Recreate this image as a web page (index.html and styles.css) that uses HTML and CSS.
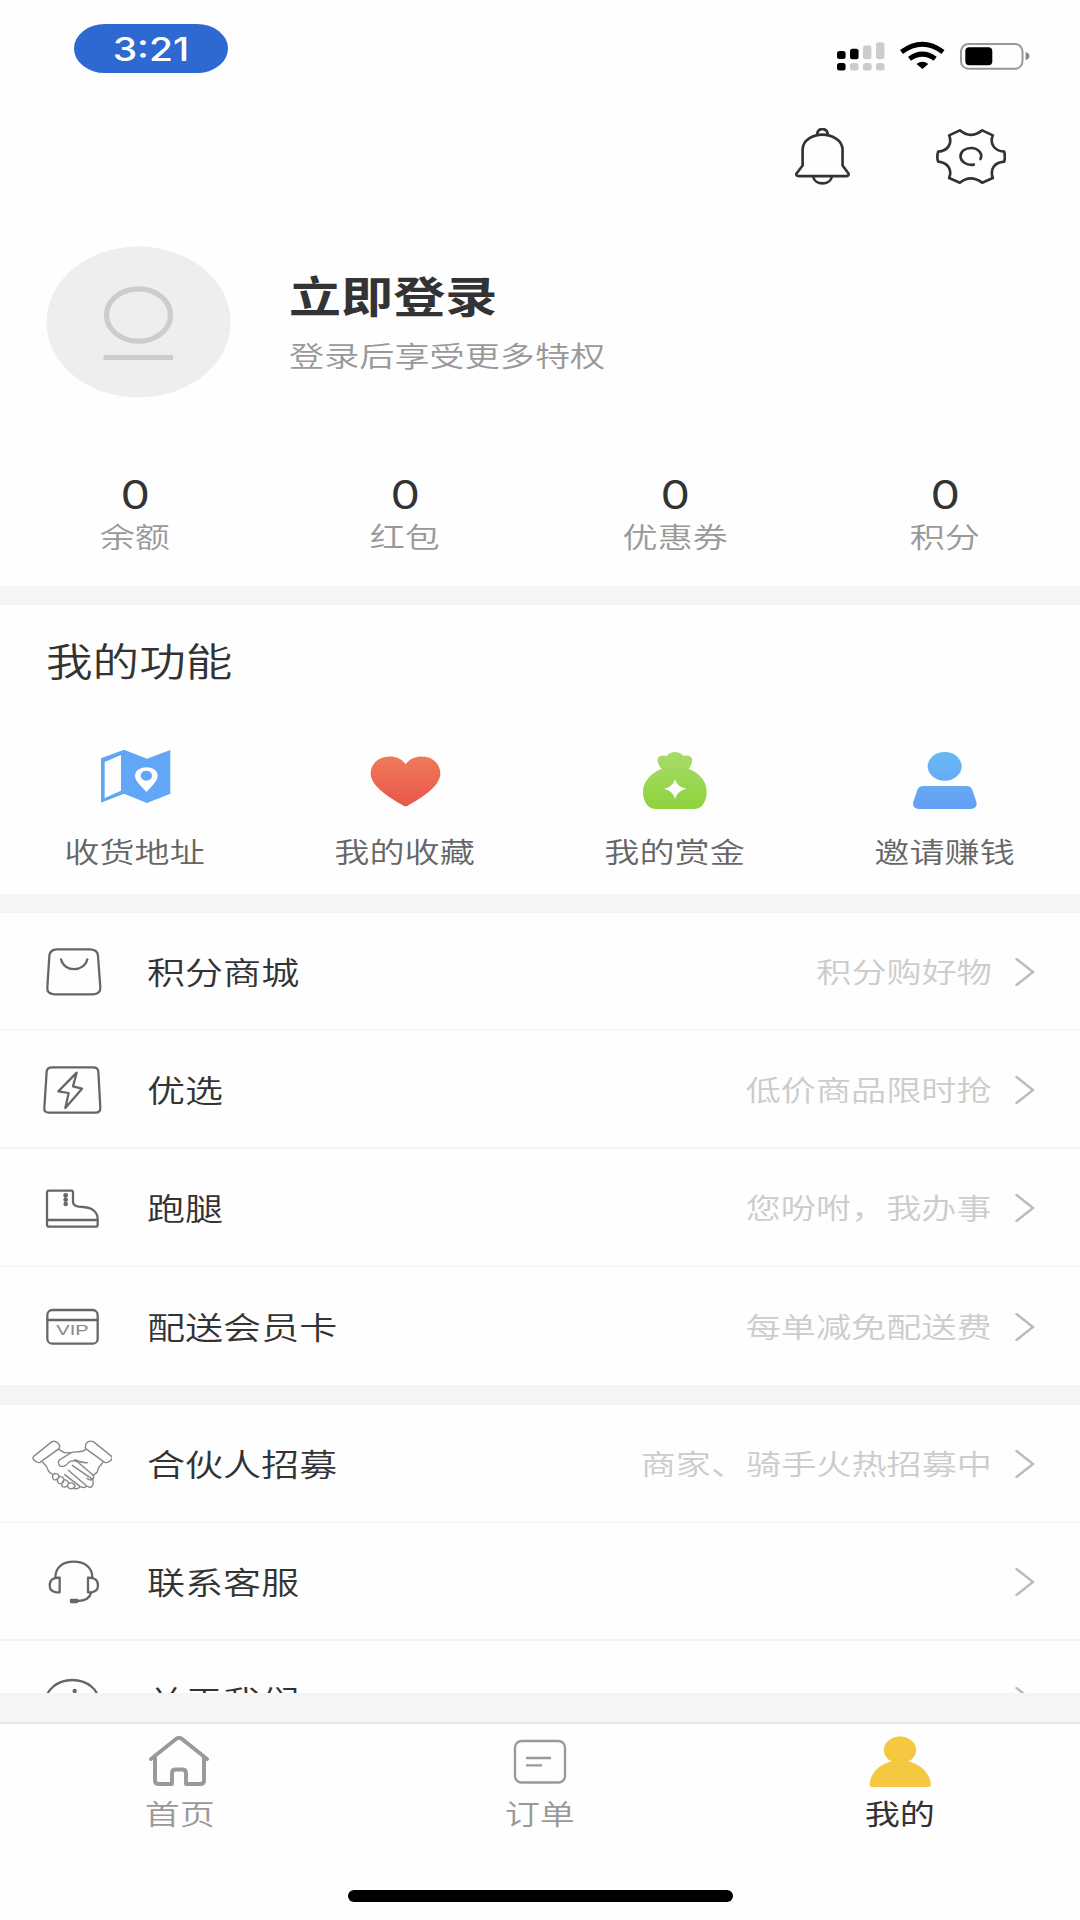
FILE: index.html
```html
<!DOCTYPE html>
<html lang="zh-CN">
<head>
<meta charset="utf-8">
<title>我的</title>
<link rel="stylesheet" href="styles.css">
</head>
<body>
<div class="page">
  <header class="status">
    <div class="time"><span>3:21</span></div>
    <svg class="indicators" viewBox="836 40 194 32" width="194" height="32">
      <g fill="#000"><rect x="837" y="51" width="8.6" height="8" rx="2.5"/><rect x="850" y="48.7" width="8.6" height="10.5" rx="2.5"/><rect x="837" y="63" width="8.6" height="7.5" rx="2.5"/></g>
      <g fill="#ccc"><rect x="863" y="45.5" width="8.4" height="13.7" rx="2.5"/><rect x="876" y="42.3" width="8.4" height="17" rx="2.5"/><rect x="850" y="63" width="8.6" height="7.5" rx="2.5"/><rect x="863" y="63" width="8.6" height="7.5" rx="2.5"/><rect x="876" y="63" width="8.6" height="7.5" rx="2.5"/></g>
      <g fill="none" stroke="#000" stroke-width="5"><path d="M901.5 52Q922.5 36.500 943 52"/><path d="M909.500 58.800Q922.500 49.500 935.200 58.800"/></g>
      <path d="M916.500 64Q922.500 59.500 928.300 64L922.400 69z"/>
      <rect x="961" y="44" width="61.500" height="24.800" rx="7.500" fill="none" stroke="#999" stroke-width="2"/>
      <rect x="965.300" y="47.200" width="27" height="18" rx="4"/>
      <path d="M1025.600 52Q1029.500 53 1029.500 56T1025.600 60z" fill="#888"/>
    </svg>
  </header>

  <div class="tools">
    <svg viewBox="105 322 164 172" width="55" height="57" class="line dark">
      <path d="M171 342q0-16 15.500-17.500q15.500 1.500 16.500 17.500"/>
      <path d="M186.500 342C214 342 246 358 247.500 386V435L266 460Q266 467 259 467H114Q107 466 108 460L127 435V386C128 358 159 342 186.500 342z"/>
      <path d="M159 469C163 496 211 496 215 469"/>
    </svg>
    <svg viewBox="527 329 209 165" width="70" height="55" class="line dark">
      <path d="M598 333Q630 360 665 333L697 348C687 372 700 394 731 397Q735 412 731 427C700 430 688 450 697 476L665 490Q630 464 598 490L566 476C576 450 562 430 533 427Q528 412 533 397C562 394 576 374 566 348z"/>
      <path d="M640 436C617 439 600 426 600 411C600 396 614 386 632 386C652 386 668 402 660 419"/>
    </svg>
  </div>

  <section class="profile">
    <svg class="avatar" viewBox="0 0 185 152" width="185" height="152">
      <ellipse cx="92.500" cy="76" rx="92" ry="75.500" fill="#eee"/>
      <ellipse cx="92.500" cy="69" rx="32" ry="26.200" fill="none" stroke="#ccc" stroke-width="5.200"/>
      <path d="M57.500 111.500H127" stroke="#ccc" stroke-width="5"/>
    </svg>
    <div class="login">
      <div class="login-title"><span class="t">立即登录</span></div>
      <div class="login-sub"><span class="t">登录后享受更多特权</span></div>
    </div>
  </section>

  <section class="stats">
    <div class="stat"><span class="num">0</span><span class="t">余额</span></div>
    <div class="stat"><span class="num">0</span><span class="t">红包</span></div>
    <div class="stat"><span class="num">0</span><span class="t">优惠券</span></div>
    <div class="stat"><span class="num">0</span><span class="t">积分</span></div>
  </section>

  <section class="features">
    <h2><span class="t">我的功能</span></h2>
    <div class="grid">
      <div class="feature">
        <svg viewBox="180 78 213 198" width="71" height="66">
          <path fill="#62a6f7" fill-rule="evenodd" d="M183 115L252 89L321 116L391 90V221L321 249L252 221L183 248zM194 126V234L243 212V105z"/>
          <path fill="#fff" fill-rule="evenodd" d="M319 216C306 200 285 184 285 167C286 133 353 133 353 167C353 184 332 201 319 216zM319 152a17 15 0 1 0 .1 0z"/>
        </svg>
        <span class="t">收货地址</span>
      </div>
      <div class="feature">
        <svg viewBox="989 78 213 198" width="71" height="66">
          <defs><linearGradient id="red" x1="0" y1="0" x2="0" y2="1"><stop offset="0" stop-color="#f07a58"/><stop offset="1" stop-color="#e9544d"/></linearGradient></defs>
          <path fill="url(#red)" d="M1096 133C1080 108 1050 106 1030 112C1004 120 991 138 991 162C993 202 1054 237 1090 257Q1096 261 1102 257C1138 237 1198 202 1200 162C1200 138 1186 119 1162 112C1140 106 1112 110 1096 133z"/>
        </svg>
        <span class="t">我的收藏</span>
      </div>
      <div class="feature">
        <svg viewBox="240 78 213 198" width="71" height="66">
          <defs><linearGradient id="green" x1="0" y1="0" x2="0" y2="1"><stop offset="0" stop-color="#a8db6b"/><stop offset="1" stop-color="#8ed33d"/></linearGradient></defs>
          <path fill="url(#green)" fill-rule="evenodd" d="M305 147C296 137 290 123 294 113Q301 104 319 108Q330 96 345 96T371 108Q387 104 395 113C399 124 394 137 386 146C418 158 441 184 440 216C440 235 433 252 421 262Q414 267 402 267H288Q276 267 269 262C256 252 249 235 249 216C249 185 273 158 305 147zM345 178Q338 202 311 207Q337 211 345 236Q352 212 379 206Q352 202 345 178z"/>
        </svg>
        <span class="t">我的赏金</span>
      </div>
      <div class="feature">
        <svg viewBox="1049 78 213 198" width="71" height="66">
          <defs><linearGradient id="blue" gradientUnits="userSpaceOnUse" x1="0" y1="96" x2="0" y2="267"><stop offset="0" stop-color="#68b8f5"/><stop offset="1" stop-color="#649ff3"/></linearGradient></defs>
          <g fill="url(#blue)"><ellipse cx="1153" cy="139" rx="51" ry="43"/><path d="M1090 198H1218Q1232 198 1236 210L1249 248Q1250 267 1227 267H1080Q1057 267 1058 248L1071 210Q1075 198 1090 198z"/></g>
        </svg>
        <span class="t">邀请赚钱</span>
      </div>
    </div>
  </section>

  <main class="lists">
    <section class="list">
      <div class="row">
        <svg class="icon line" viewBox="36 33 240 240"><path d="M110 88H211Q233 89 234 108L241 202Q242 222 219 223H103Q80 222 82 202L88 108Q90 89 110 88z"/><path d="M123 118C132 158 193 157 202 118"/></svg>
        <span class="t name">积分商城</span><span class="t hint">积分购好物</span>
        <svg class="arrow" viewBox="0 0 20 28"><path d="M1.500 1L18 14L1.500 27"/></svg>
      </div>
      <div class="row">
        <svg class="icon line" viewBox="36 387 240 240"><path d="M97 442H219Q234 442 235 455L241 564Q241 578 227 578H87Q72 578 73 564L80 455Q81 442 97 442z"/><path d="M170 458L115 514L146 519L136 564L186 506L159 499z"/></svg>
        <span class="t name">优选</span><span class="t hint">低价商品限时抢</span>
        <svg class="arrow" viewBox="0 0 20 28"><path d="M1.500 1L18 14L1.500 27"/></svg>
      </div>
      <div class="row">
        <svg class="icon line" viewBox="36 51 240 240"><path d="M87 122H154Q159 122 159 127V157C160 168 172 171 190 171C218 173 233 187 233 207V224Q233 230 227 230H87Q81 230 81 224V128Q81 122 87 122zM82 210H232"/><g fill="#666" stroke="none"><circle cx="137" cy="136" r="7"/><circle cx="137" cy="149" r="7"/><circle cx="137" cy="162" r="7"/></g></svg>
        <span class="t name">跑腿</span><span class="t hint">您吩咐，我办事</span>
        <svg class="arrow" viewBox="0 0 20 28"><path d="M1.500 1L18 14L1.500 27"/></svg>
      </div>
      <div class="row">
        <svg class="icon line" viewBox="36 407 240 240"><rect x="82" y="479" width="151" height="101" rx="15"/><path d="M82 509H233"/><text x="109" y="554" textLength="97" lengthAdjust="spacingAndGlyphs" class="vip">VIP</text></svg>
        <span class="t name">配送会员卡</span><span class="t hint">每单减免配送费</span>
        <svg class="arrow" viewBox="0 0 20 28"><path d="M1.500 1L18 14L1.500 27"/></svg>
      </div>
    </section>

    <section class="list">
      <div class="row">
        <svg class="icon line thin" viewBox="36 98 240 240">
          <path d="M41 198L96 154Q105 150 114 158Q122 167 117 175L60 216Q51 219 43 210Q36 204 41 198z"/>
          <path d="M275 198L220 154Q211 150 202 156Q194 164 197 175L254 216Q262 219 271 211Q279 204 275 198z"/>
          <path d="M117 178L133 187H150M198 177Q190 185 175 184L155 186L118 209C111 218 117 230 129 228Q137 228 146 216Q160 207 173 215L218 253Q224 260 218 267Q212 272 201 264M68 216Q81 227 85 241Q89 249 97 251M248 217Q235 229 231 246L220 255M165 208Q183 218 202 217"/>
          <path d="M157 225L218 267Q222 283 215 289Q209 293 200 287L145 240M200 287Q194 295 181 289L134 253M181 289Q171 298 161 294"/>
          <path d="M105 249q13 1 11 12q-5 10-15 7q-9-11 4-19zM119 258q13 1 13 12q-4 13-16 9q-9-9 3-21zM133 268q14 3 12 14q-5 11-17 7q-8-9 5-21zM147 278q15-2 18 9q-3 10-15 8q-13-5-3-17z"/>
        </svg>
        <span class="t name">合伙人招募</span><span class="t hint">商家、骑手火热招募中</span>
        <svg class="arrow" viewBox="0 0 20 28"><path d="M1.500 1L18 14L1.500 27"/></svg>
      </div>
      <div class="row">
        <svg class="icon line" viewBox="36 453 240 240"><path d="M106 561C107 531 129 515 161 515S216 531 217 561M119 563V607H109Q89 605 89 586Q89 562 119 563zM204 563V607H214Q234 605 234 586Q234 562 204 563zM214 607C210 625 193 633 172 633"/><rect x="153" y="630" width="18" height="6" fill="#666"/></svg>
        <span class="t name">联系客服</span>
        <svg class="arrow" viewBox="0 0 20 28"><path d="M1.500 1L18 14L1.500 27"/></svg>
      </div>
      <div class="row">
        <svg class="icon line" viewBox="36 809 240 240"><ellipse cx="157" cy="935" rx="80" ry="66"/><circle cx="164" cy="902" r="6.500" fill="#666" stroke="none"/><path d="M160 922V968"/></svg>
        <span class="t name">关于我们</span>
        <svg class="arrow" viewBox="0 0 20 28"><path d="M1.500 1L18 14L1.500 27"/></svg>
      </div>
    </section>
  </main>

  <nav class="tabs">
    <div class="tab">
      <svg viewBox="147 1734 64 54" width="64" height="54" fill="none" stroke="#999" stroke-width="3.900" stroke-linejoin="round" stroke-linecap="round"><path d="M155 1758V1781Q155 1784 159 1784H172V1773Q172 1769.500 176 1769.500H182Q186 1769.500 186 1773V1784H200Q204 1784 204 1781V1758"/><path d="M151 1759L176 1739Q179 1736.500 182 1739L207 1759"/></svg>
      <span class="t">首页</span>
    </div>
    <div class="tab">
      <svg viewBox="507 1734 64 54" width="64" height="54" fill="none" stroke="#999" stroke-width="2.300"><rect x="515" y="1741" width="50" height="41.500" rx="6.500"/><path d="M526 1758H551M526 1765.300H542"/></svg>
      <span class="t">订单</span>
    </div>
    <div class="tab active">
      <svg viewBox="867 1734 64 54" width="64" height="54" fill="#f5c842"><ellipse cx="900" cy="1750" rx="16.200" ry="13.500"/><path d="M869.500 1784Q872 1766 893 1761H907Q928 1766 931 1784Q931 1787 928 1787H872.500Q869.500 1787 869.500 1784z"/></svg>
      <span class="t">我的</span>
    </div>
  </nav>
  <div class="home-bar"></div>
</div>
</body>
</html>
```
FILE: styles.css
```css
* { box-sizing: border-box; }

body {
  margin: 0;
  background: #fefefe;
  color: #333;
  font-family: "Noto Sans CJK SC", sans-serif;
  font-size: 28.8px;
  font-weight: 350;
}

.page {
  display: flex;
  flex-direction: column;
  width: 1080px;
  height: 1920px;
  overflow: hidden;
}

/* wide lettering used by every label */
.t {
  display: inline-block;
  white-space: nowrap;
  line-height: 40px;
  transform: scaleX(1.22);
}

svg { display: block; flex: none; }

.line {
  fill: none;
  stroke: #666;
  stroke-width: 6.8;
  stroke-linejoin: round;
  stroke-linecap: round;
}
.line.dark { stroke: #333; stroke-width: 8; }
.line.thin { stroke: #888; stroke-width: 4.2; }

.status {
  display: flex;
  justify-content: space-between;
  align-items: flex-start;
  height: 127px;
  padding: 24px 50px 0 74px;
}
.time {
  width: 154px;
  height: 49px;
  border-radius: 31px / 24.5px;
  background: #2e69d1;
  color: #fff;
  font: 500 32.5px/51px Inter, sans-serif;
  text-align: center;
}
.time span { display: inline-block; transform: scaleX(1.2); }
.indicators { margin-top: 16px; }

.tools {
  display: flex;
  justify-content: flex-end;
  align-items: center;
  gap: 86px;
  height: 59px;
  padding-right: 74.5px;
}

.profile {
  display: flex;
  gap: 58px;
  height: 292px;
  padding: 60px 0 0 46px;
}
.login .t { transform-origin: left center; }
.login-title { height: 60px; margin-top: 18px; }
.login-title .t { font-size: 42.7px; font-weight: 700; line-height: 60px; }
.login-sub { height: 40px; margin-top: 10px; color: #999; }

.stats { display: flex; height: 108px; }
.stat {
  flex: 1;
  display: flex;
  flex-direction: column;
  align-items: center;
  color: #999;
}
.stat .num {
  color: #333;
  font: 400 39px/40px Inter, sans-serif;
  height: 40px;
  margin-bottom: -2px;
  transform: scaleX(1.2) translateY(-3px);
}

.features {
  height: 327px;
  border-top: 19px solid #f5f5f5;
  border-bottom: 19px solid #f5f5f5;
}
.features h2 {
  height: 60px;
  margin: 25px 0 0 46px;
  font-size: 38.2px;
  font-weight: 350;
}
.features h2 .t { line-height: 60px; transform-origin: left center; }
.grid { display: flex; margin-top: 56px; }
.feature {
  flex: 1;
  display: flex;
  flex-direction: column;
  align-items: center;
  gap: 19px;
  color: #666;
}

.lists {
  height: 780px;
  overflow: hidden;
}
.list + .list { border-top: 20px solid #f5f5f5; }
.row {
  display: flex;
  align-items: center;
  height: 118px;
  padding: 0 45px 0 32px;
  border-bottom: 2px solid #f5f5f5;
}
.row:last-child { border-bottom: 0; }
.icon { width: 80px; height: 80px; margin-right: 35px; }
.name { font-size: 31.2px; transform-origin: left center; }
.hint { margin-left: auto; color: #ccc; transform-origin: right center; }
.arrow {
  width: 20px;
  height: 28px;
  margin: 2px 0 0 23px;
  fill: none;
  stroke: #bbb;
  stroke-width: 2.4;
  stroke-linecap: round;
}
.name + .arrow { margin-left: auto; }
.vip {
  fill: #888;
  stroke: none;
  font: 400 43px "Liberation Sans", sans-serif;
}

.tabs {
  display: flex;
  height: 168px;
  padding-top: 12px;
  border-top: 29px solid #f5f5f5;
  box-shadow: inset 0 2px #e6e6e6;
}
.tab {
  flex: 1;
  display: flex;
  flex-direction: column;
  align-items: center;
  gap: 5px;
  color: #999;
}
.tab svg { margin-left: -2px; }
.active { color: #333; font-weight: 400; }

.home-bar {
  width: 385px;
  height: 12px;
  margin: 29px auto 0;
  border-radius: 6px;
  background: #000;
}
```
